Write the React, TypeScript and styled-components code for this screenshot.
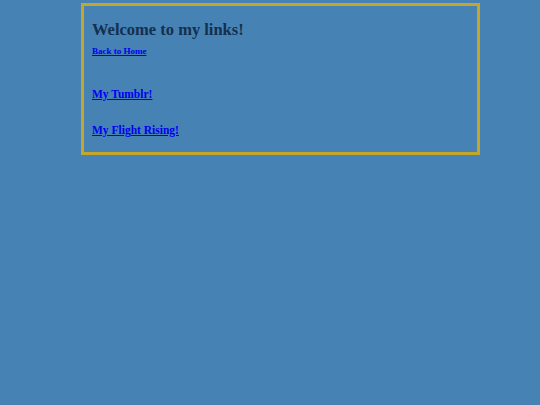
import React from 'react';
import styled, { createGlobalStyle } from 'styled-components';

const GlobalStyle = createGlobalStyle`
  html, body {
    margin: 0;
    padding: 0;
    background: #4682b4;
    font-family: Georgia, "Liberation Serif", serif;
  }
`;

const Page = styled.div`
  padding: 3px 0 0 81px;
`;

const Box = styled.div`
  box-sizing: border-box;
  width: 399px;
  height: 152px;
  border: 3px solid #c4a62a;
  padding: 0 8px;
`;

const Title = styled.h2`
  margin: 14px 0 0;
  font-size: 16.5px;
  line-height: 20px;
  font-weight: bold;
  color: #13304e;
`;

const Small = styled.a`
  display: block;
  margin-top: 5px;
  font-size: 9px;
  line-height: 12px;
  font-weight: bold;
  color: #0000ee;
`;

const Big = styled.a<{ $top: number }>`
  display: block;
  margin-top: ${(p) => p.$top}px;
  font-size: 11.5px;
  line-height: 14px;
  font-weight: bold;
  color: #0000ee;
`;

export default function App() {
  return (
    <>
      <GlobalStyle />
      <Page>
        <Box>
          <Title>Welcome to my links!</Title>
          <Small href="#">Back to Home</Small>
          <Big href="#" $top={30}>My Tumblr!</Big>
          <Big href="#" $top={22}>My Flight Rising!</Big>
        </Box>
      </Page>
    </>
  );
}
